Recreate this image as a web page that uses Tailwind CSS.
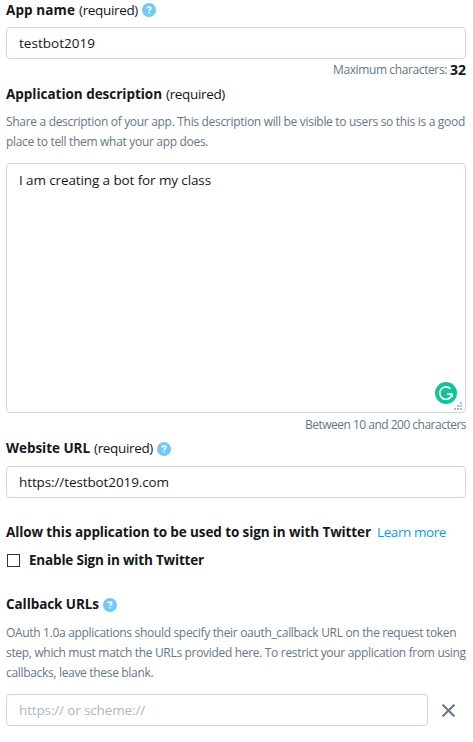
<!DOCTYPE html>
<html lang="en">
<head>
<meta charset="utf-8">
<title>App details</title>
<script src="https://cdn.jsdelivr.net/npm/@tailwindcss/browser@4"></script>
</head>
<body class="h-[742px] overflow-hidden bg-white font-['Open_Sans','Noto_Sans',sans-serif] text-[13.5px] leading-5 text-[#14171a]">
<svg class="hidden">
  <symbol id="help" viewBox="0 0 14 14">
    <circle cx="7" cy="7" r="7" fill="#71c9f8"/>
    <path d="M5.2 5.6C5.2 4.5 6 4 7 4s1.8.6 1.8 1.5c0 1.1-1.6 1.2-1.6 2.4" fill="none" stroke="#fff" stroke-width="1.6"/>
    <rect x="6.4" y="8.9" width="1.6" height="1.5" fill="#fff"/>
  </symbol>
</svg>
<form class="flex w-[466px] flex-col pl-1.5 whitespace-nowrap">
  <label class="flex h-5 items-center">
    <span class="w-[73px] font-bold tracking-[0.104px]">App name</span>
    <span class="w-[63px] tracking-[-0.336px]">(required)</span>
    <svg class="size-3.5"><use href="#help"/></svg>
  </label>
  <div class="mt-[7px] flex h-8 items-center rounded-[4px] border border-[#ccd6dd] pl-3 tracking-[0.027px]">testbot2019</div>
  <div class="mt-px flex h-5 items-center justify-end text-xs leading-5 text-[#657786]">
    <span class="w-[117px] tracking-[-0.387px]">Maximum characters:</span>
    <span class="text-sm font-bold text-[#14171a]">32</span>
  </div>
  <label class="mt-1 flex h-5 items-center">
    <span class="w-40 font-bold tracking-[-0.027px]">Application description</span>
    <span class="tracking-[-0.336px]">(required)</span>
  </label>
  <p class="mt-2 text-xs leading-5 tracking-[-0.312px] text-[#657786]">Share a description of your app. This description will be visible to users so this is a good<br>place to tell them what your app does.</p>
  <div class="relative mt-[11px] h-[250px] rounded-[4px] border border-[#ccd6dd] pt-1.5 pl-3 tracking-[-0.112px]">I am creating a bot for my class
    <svg class="absolute right-2 bottom-2 size-[22px]" viewBox="0 0 22 22" fill="none">
      <circle cx="11" cy="11" r="11" fill="#15c39a"/>
      <path d="M15.4 6.8A6.2 6.2 0 1 0 16.4 14M12 12.2h5" stroke="#fff" stroke-width="1.6"/>
      <path d="M14 11.5h3.8v4.3z" fill="#fff"/>
    </svg>
    <svg class="absolute right-[3px] bottom-0.5 size-2" viewBox="0 0 8 8" fill="#b8b8b8">
      <path d="M6 0h2v2H6zM3 3h2v2H3zM6 3h2v2H6zM0 6h2v2H0zM3 6h2v2H3zM6 6h2v2H6z"/>
    </svg>
  </div>
  <div class="mt-0.5 h-5 text-right text-xs leading-5 tracking-[-0.51px] text-[#657786]">Between 10 and 200 characters</div>
  <label class="mt-[3px] flex h-5 items-center">
    <span class="w-[88px] font-bold tracking-[-0.044px]">Website URL</span>
    <span class="w-[63px] tracking-[-0.336px]">(required)</span>
    <svg class="mt-0.5 size-3.5"><use href="#help"/></svg>
  </label>
  <div class="mt-2 flex h-8 items-center rounded-[4px] border border-[#ccd6dd] pl-3 tracking-[-0.104px]">https://testbot2019.com</div>
  <div class="mt-6 flex h-5 items-center">
    <span class="w-[371px] font-bold tracking-[-0.105px]">Allow this application to be used to sign in with Twitter</span>
    <a class="tracking-[-0.415px] text-[#1b95e0]">Learn more</a>
  </div>
  <label class="mt-2 flex h-5 items-center">
    <span class="mt-px mr-2 ml-px size-[13px] border border-[#333]"></span>
    <span class="pl-px font-bold tracking-[-0.186px]">Enable Sign in with Twitter</span>
  </label>
  <label class="mt-6 flex h-5 items-center">
    <span class="w-[97px] font-bold tracking-[-0.074px]">Callback URLs</span>
    <svg class="mt-0.5 size-3.5"><use href="#help"/></svg>
  </label>
  <p class="mt-[9px] text-xs leading-5 tracking-[-0.32px] text-[#657786]">OAuth 1.0a applications should specify their oauth_callback URL on the request token<br>step, which must match the URLs provided here. To restrict your application from using<br>callbacks, leave these blank.</p>
  <div class="mt-[11px] flex items-center">
    <div class="flex h-8 w-[422px] items-center rounded-[4px] border border-[#ccd6dd] pl-3 tracking-[-0.142px] text-[#aab8c2]">https:// or scheme://</div>
    <svg class="ml-3.5 size-[13px]" viewBox="0 0 13 13" fill="none" stroke="#657786" stroke-width="2"><path d="M.6.6l11.8 11.8M12.4.6L.6 12.4"/></svg>
  </div>
</form>
</body>
</html>
